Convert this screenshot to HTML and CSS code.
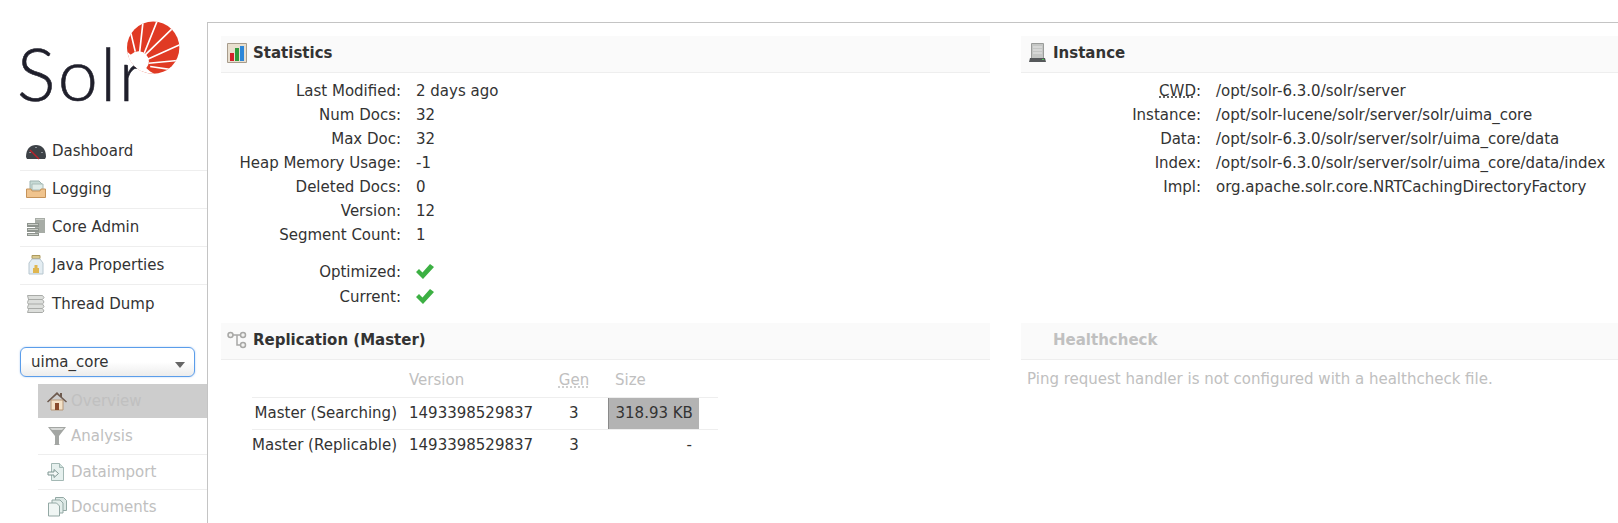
FILE: index.html
```html
<!DOCTYPE html>
<html>
  <head>
    <meta charset="UTF-8" />
    <title>Solr Admin</title>
    <link rel="stylesheet" href="styles.css">
  </head>
  <body>
    <div class="page">
      <aside class="sidebar">
        <div class="logo">
          <span class="logo-text">Solr</span>
          <svg class="logo-sun" viewBox="380 60 160 165">
            <defs>
              <clipPath id="sunClip"><circle cx="459" cy="143" r="79" /></clipPath>
            </defs>
            <g clip-path="url(#sunClip)">
              <path fill="#e03a24" d="M380 60h160v165H380z" />
              <path fill="#fff" d="M375 150L450 215 470 226 375 230z" />
              <path stroke="#fff" stroke-width="5" fill="none" d="M405 155L380 50M418 158L430 50M432 160L482 35M435 165L550 53M442 178L560 125M445 190L560 179M450 200L560 216" />
              <circle cx="415" cy="185" r="31" fill="#fff" />
            </g>
          </svg>
        </div>

        <ul class="nav">
          <li>
            <svg class="icon" viewBox="0 0 20 20"><path fill="#3d4247" d="M0 16C0 8 4 4 10 4s10 4 10 12l-1 2H1z" /><path fill="#8b9095" d="M3 11h2v1H3zM9 6h2v1H9zM15 11h2v1h-2z" /><path stroke="#b8232c" stroke-width="1.5" d="M4 9l9 9" /></svg>
            Dashboard
          </li>
          <li>
            <svg class="icon" viewBox="0 0 20 20"><path fill="#c7dbd6" stroke="#9fb4b0" d="M4 2h9l3 3v6H4z" /><path fill="#e0ece8" stroke="#a9bcb8" d="M6 5h11v6H6z" /><path fill="#f0c48e" stroke="#c5935a" d="M0.5 10H5l1 2h8l1-2h4.500v8.500H.5z" /></svg>
            Logging
          </li>
          <li>
            <svg class="icon" viewBox="0 0 20 20"><path fill="#a7aca6" d="M9 1h10v15H9z" /><path fill="#8e948e" d="M1 6h12v4H1zM1 11h12v4H1zM1 16h12v3H1z" /><path fill="#c8ccc6" d="M2 7h10v1H2zM2 12h10v1H2zM2 17h10v1H2zM10 2h8v1h-8z" /></svg>
            Core Admin
          </li>
          <li>
            <svg class="icon" viewBox="0 0 20 20"><path fill="#d9c98f" stroke="#ad9a5e" d="M6 .5h8v3H6z" /><path fill="#e4edf2" stroke="#b7c6cf" d="M6 4h8l3 4v11H3V8z" /><path fill="#e0b64f" d="M7 13h6v5H7zM8.500 10h3v3h-3z" /></svg>
            Java Properties
          </li>
          <li>
            <svg class="icon" viewBox="0 0 20 20"><path fill="#dcdedb" stroke="#a9aba8" d="M1.500 1.500h15l1.500 2-1.500 2 1.500 2.500-1.500 2 1.500 2.500-1.500 2 1.500 2.500-1.500 1.500h-15l1-3-1-2 1-3-1-2 1-3z" /><path stroke="#a9aba8" d="M2 5.500h14M2 10h14M2 14.500h14" /></svg>
            Thread Dump
          </li>
        </ul>

        <div class="core-select">
          <span>uima_core</span>
          <i class="caret"></i>
        </div>

        <ul class="subnav">
          <li class="active">
            <svg class="icon" viewBox="0 0 20 20"><path fill="#f4e2c8" stroke="#b89878" d="M4 9h12v10H4z" /><path fill="#8a4b2c" d="M8 12h4v7H8z" /><path fill="#6d5a4e" d="M0 10.500L10 1l3 3V2h2v4l5 4.500-1 1L10 3.500 1 11.500z" /></svg>
            Overview
          </li>
          <li>
            <svg class="icon" viewBox="0 0 20 20"><path fill="#a3a6a3" d="M1 1h18l-7 9v8l1 1H7l1-1v-8z" /><path fill="#d6d8d6" d="M3 2h14l-2 2H5z" /></svg>
            Analysis
          </li>
          <li>
            <svg class="icon" viewBox="0 0 20 20"><path fill="#e6f0ee" stroke="#a3b8b4" d="M4.500 1.500h8l4 4v13h-12z" /><path fill="#cfe0dc" stroke="#a3b8b4" d="M12.500 1.500v4h4" /><path fill="#f4f8f7" stroke="#7f9692" d="M1 10h6V7.500l4.500 4-4.500 4V13H1z" /></svg>
            Dataimport
          </li>
          <li>
            <svg class="icon" viewBox="0 0 20 20"><path fill="#dce8e5" stroke="#93a8a4" d="M8.500 .5h8l3 3v10h-11z" /><path fill="#e4eeeb" stroke="#93a8a4" d="M5 3h8l3 3v10H5z" /><path fill="#f0f6f4" stroke="#93a8a4" d="M1.500 6h8l3 3v10h-11z" /></svg>
            Documents
          </li>
        </ul>
      </aside>

      <main class="content">
        <div class="column">
          <section class="block block-stats">
            <h2>
              <svg class="icon" viewBox="0 0 20 20"><path fill="#e8dfcf" stroke="#a79c8c" d="M.5 .5h19v19H.5z" /><path fill="#d4202a" d="M3 10h4v8H3z" /><path fill="#2f9a3c" d="M8 5h4v13H8z" /><path fill="#2c86d8" d="M13 3h4v15h-4z" /></svg>
              Statistics
            </h2>
            <dl class="props">
              <dt>Last Modified:</dt><dd>2 days ago</dd>
              <dt>Num Docs:</dt><dd>32</dd>
              <dt>Max Doc:</dt><dd>32</dd>
              <dt>Heap Memory Usage:</dt><dd>-1</dd>
              <dt>Deleted Docs:</dt><dd>0</dd>
              <dt>Version:</dt><dd>12</dd>
              <dt>Segment Count:</dt><dd>1</dd>
            </dl>
            <dl class="props props-flags">
              <dt>Optimized:</dt>
              <dd><svg class="tick" viewBox="0 0 18 16"><path fill="#3cb043" d="M0 8l3-3 3.500 3.500L14 0l4 3L7 15z" /></svg></dd>
              <dt>Current:</dt>
              <dd><svg class="tick" viewBox="0 0 18 16"><path fill="#3cb043" d="M0 8l3-3 3.500 3.500L14 0l4 3L7 15z" /></svg></dd>
            </dl>
          </section>

          <section class="block">
            <h2>
              <svg class="icon" viewBox="0 0 20 20"><g fill="#f2f2f0" stroke="#a8a8a6" stroke-width="1.500"><circle cx="3.500" cy="5" r="2.500" /><circle cx="16" cy="5" r="2.500" /><circle cx="16" cy="15" r="2.500" /><path fill="none" d="M6 5h7.500M10 5v10h3.500" /></g></svg>
              Replication (Master)
            </h2>
            <table class="replication">
              <thead>
                <tr>
                  <th class="col-name"></th>
                  <th class="col-version">Version</th>
                  <th class="col-gen"><abbr>Gen</abbr></th>
                  <th class="col-size">Size</th>
                  <th class="col-end"></th>
                </tr>
              </thead>
              <tbody>
                <tr>
                  <td class="col-name">Master (Searching)</td>
                  <td class="col-version">1493398529837</td>
                  <td class="col-gen">3</td>
                  <td class="col-size current">318.93 KB</td>
                  <td class="col-end"></td>
                </tr>
                <tr>
                  <td class="col-name">Master (Replicable)</td>
                  <td class="col-version">1493398529837</td>
                  <td class="col-gen">3</td>
                  <td class="col-size">-</td>
                  <td class="col-end"></td>
                </tr>
              </tbody>
            </table>
          </section>
        </div>

        <div class="column column-right">
          <section class="block block-stats">
            <h2>
              <svg class="icon" viewBox="0 0 20 20"><path fill="#c4c6c4" stroke="#9a9c9a" d="M4.500 .5h12v15h-12z" /><path stroke="#e8e8e8" d="M6 4h9M6 7h9M6 10h9" /><path fill="#55585a" d="M3 15h15l1 4H2z" /><path fill="#4fc25a" d="M15 16h2v1h-2z" /></svg>
              Instance
            </h2>
            <dl class="props">
              <dt><abbr>CWD</abbr>:</dt><dd>/opt/solr-6.3.0/solr/server</dd>
              <dt>Instance:</dt><dd>/opt/solr-lucene/solr/server/solr/uima_core</dd>
              <dt>Data:</dt><dd>/opt/solr-6.3.0/solr/server/solr/uima_core/data</dd>
              <dt>Index:</dt><dd>/opt/solr-6.3.0/solr/server/solr/uima_core/data/index</dd>
              <dt>Impl:</dt><dd>org.apache.solr.core.NRTCachingDirectoryFactory</dd>
            </dl>
          </section>

          <section class="block block-disabled">
            <h2><span class="icon"></span>Healthcheck</h2>
            <p class="message">Ping request handler is not configured with a healthcheck file.</p>
          </section>
        </div>
      </main>
    </div>
  </body>
</html>
```

FILE: styles.css
```css
* {
  box-sizing: border-box;
}

html,
body {
  margin: 0;
  height: 100%;
  overflow: hidden;
}

body {
  font-family: "DejaVu Sans", sans-serif;
  font-size: 15px;
  color: #333;
  background-color: #fff;
}

ul {
  list-style: none;
  margin: 0;
  padding: 0;
}

.page {
  display: flex;
  height: 523px;
  padding-top: 22px;
}

.icon {
  display: inline-block;
  flex: none;
  width: 20px;
  height: 20px;
}

/* sidebar */

.sidebar {
  flex: none;
  width: 207px;
  margin-top: -22px;
  padding-left: 20px;
}

.logo {
  position: relative;
  height: 133px;
}

.logo-text {
  position: absolute;
  left: -3px;
  top: 29px;
  font-family: "Lato", sans-serif;
  font-weight: 300;
  font-size: 72px;
  line-height: 88px;
  letter-spacing: 2.5px;
  color: #1f1f2b;
  -webkit-text-stroke: 0.6px #1f1f2b;
}

.logo-sun {
  position: absolute;
  left: 107px;
  top: 20px;
  width: 53px;
  height: 55px;
}

.nav li {
  display: flex;
  align-items: center;
  gap: 6px;
  height: 38px;
  padding: 0 0 1px 6px;
  border-bottom: 1px solid #eee;
}

.nav li:last-child {
  border-bottom: none;
}

.core-select {
  display: flex;
  align-items: center;
  justify-content: space-between;
  width: 175px;
  height: 30px;
  margin-top: 24px;
  padding: 0 10px;
  border: 1px solid #5b9dea;
  border-radius: 6px;
  background: linear-gradient(#fff 50%, #ececec);
  box-shadow: 0 0 2px #a9c8ef;
}

.caret {
  width: 0;
  height: 0;
  margin: 6px -1px 0 0;
  border-left: 5px solid transparent;
  border-right: 5px solid transparent;
  border-top: 6px solid #666;
}

.subnav {
  margin: 7px 0 0 18px;
}

.subnav li {
  display: flex;
  align-items: center;
  gap: 4px;
  height: 35.500px;
  padding-left: 9px;
  border-bottom: 1px solid #eee;
  color: #c0c0c0;
}

.subnav li.active {
  height: 34px;
  margin-bottom: 1px;
  border-bottom: none;
  background-color: #cdcdcd;
}

/* main area */

.content {
  flex: 1;
  display: flex;
  gap: 31px;
  min-width: 0;
  padding: 13px 0 0 13px;
  border-top: 1px solid #c4c4c4;
  border-left: 1px solid #c4c4c4;
}

.column {
  flex: none;
  width: 769px;
}

.column-right {
  flex: 1;
  width: auto;
  min-width: 0;
}

.block-stats {
  height: 287px;
}

.block h2 {
  display: flex;
  align-items: center;
  gap: 6px;
  height: 37px;
  margin: 0;
  padding: 0 0 2px 6px;
  background-color: #fafafa;
  border-bottom: 1px solid #eee;
  font-size: 15px;
}

.props {
  display: grid;
  grid-template-columns: 180px 1fr;
  grid-auto-rows: 24px;
  column-gap: 15px;
  align-items: center;
  margin: 6px 0 0;
}

.props dt {
  text-align: right;
}

.props dd {
  margin: 0;
  white-space: nowrap;
}

.props-flags {
  grid-auto-rows: 25px;
  margin-top: 12px;
}

.tick {
  display: block;
  width: 18px;
  height: 16px;
}

abbr {
  text-decoration: underline dotted;
}

/* replication table */

.replication {
  width: 466px;
  margin: 4px 0 0 31px;
  border-collapse: collapse;
  table-layout: fixed;
}

.replication th,
.replication td {
  height: 32px;
  padding: 0;
  font-weight: normal;
  white-space: nowrap;
  border-bottom: 1px solid #eee;
}

.replication tbody tr:last-child td {
  border-bottom: none;
}

.replication th {
  height: 33px;
  color: #c0c0c0;
  text-align: left;
}

.col-name {
  width: 150px;
  padding-right: 5px !important;
  text-align: right;
}

.col-version {
  width: 138px;
  padding-left: 7px !important;
}

.replication .col-gen {
  width: 68px;
  text-align: center;
}

.col-size {
  width: 91px;
  padding: 0 7px 0 7px !important;
  text-align: right;
}

.replication td.current {
  background-color: #b3b3b3;
  border-top: 1px solid #8a8a8a;
  border-left: 1px solid #8a8a8a;
}

.block-disabled h2,
.block-disabled .message {
  color: #c0c0c0;
}

.message {
  margin: 10px 0 0 6px;
  white-space: nowrap;
}
```
